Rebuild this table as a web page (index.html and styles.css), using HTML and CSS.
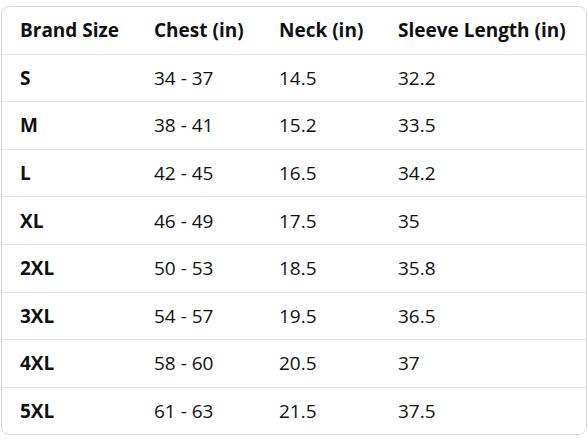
FILE: index.html
```html
<!DOCTYPE html>
<html>
<head>
<meta charset="utf-8">
<link rel="stylesheet" href="styles.css">
</head>
<body>
<div class="chart">
  <table class="size-table">
    <thead>
      <tr>
        <th class="c1">Brand Size</th>
        <th class="c2">Chest (in)</th>
        <th class="c3">Neck (in)</th>
        <th class="c4">Sleeve Length (in)</th>
      </tr>
    </thead>
    <tbody>
      <tr><th>S</th><td>34 - 37</td><td>14.5</td><td>32.2</td></tr>
      <tr><th>M</th><td>38 - 41</td><td>15.2</td><td>33.5</td></tr>
      <tr><th>L</th><td>42 - 45</td><td>16.5</td><td>34.2</td></tr>
      <tr><th>XL</th><td>46 - 49</td><td>17.5</td><td>35</td></tr>
      <tr><th>2XL</th><td>50 - 53</td><td>18.5</td><td>35.8</td></tr>
      <tr><th>3XL</th><td>54 - 57</td><td>19.5</td><td>36.5</td></tr>
      <tr><th>4XL</th><td>58 - 60</td><td>20.5</td><td>37</td></tr>
      <tr><th>5XL</th><td>61 - 63</td><td>21.5</td><td>37.5</td></tr>
    </tbody>
  </table>
</div>
</body>
</html>
```

FILE: styles.css
```css
html, body {
  margin: 0;
  padding: 0;
  background: #ffffff;
}
body {
  font-family: "Open Sans", "Noto Sans", sans-serif;
  color: #0f1111;
}
.chart {
  margin: 6px 1px 0 1px;
  width: 584px;
  border: 1px solid #d5d9d9;
  border-radius: 8px;
  overflow: hidden;
}
.size-table {
  width: 100%;
  border-collapse: separate;
  border-spacing: 0;
  table-layout: fixed;
  font-size: 19px;
}
.size-table th,
.size-table td {
  text-align: left;
  padding: 0 0 0 18px;
  height: 46.6px;
  vertical-align: middle;
  border-bottom: 1px solid #e3e6e6;
  white-space: nowrap;
}
.size-table th {
  font-weight: 700;
}
.size-table td {
  font-weight: 400;
}
.size-table tbody tr:last-child th,
.size-table tbody tr:last-child td {
  border-bottom: none;
}
.c1 { width: 116px; }
.c2 { width: 107px; }
.c3 { width: 101px; }
.c4 { width: auto; }
```
